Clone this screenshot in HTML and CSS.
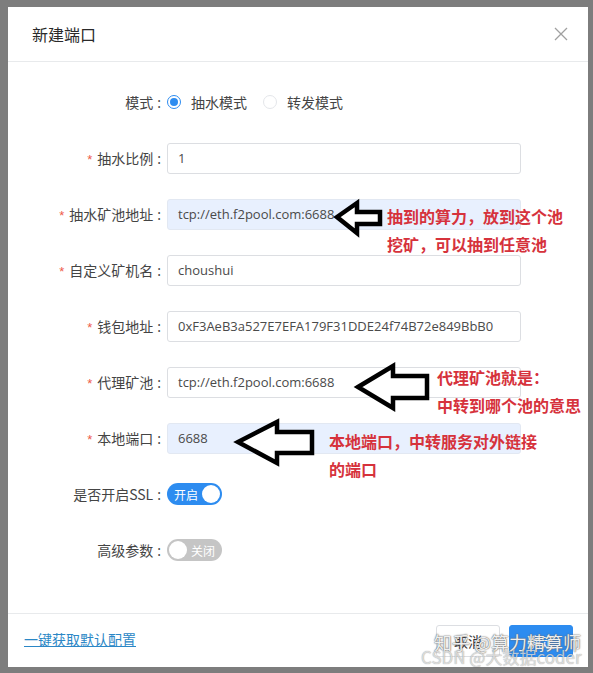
FILE: index.html
```html
<!DOCTYPE html>
<html lang="zh-CN">
<head>
<meta charset="utf-8">
<title>新建端口</title>
<link rel="stylesheet" href="styles.css">
</head>
<body>
<div class="page">
  <div class="modal">
    <div class="modal-header">
      <span class="title">新建端口</span>
      <svg class="close" width="14" height="14" viewBox="0 0 14 14"><path d="M1 1L13 13M13 1L1 13" stroke="#a0a0a0" stroke-width="1.3" fill="none"/></svg>
    </div>
    <div class="modal-body">
      <div class="item">
        <label class="label">模式<span class="colon">:</span></label>
        <div class="control radios">
          <span class="radio checked"><span class="dot"></span></span><span class="radio-text">抽水模式</span>
          <span class="radio"></span><span class="radio-text">转发模式</span>
        </div>
      </div>
      <div class="item">
        <label class="label"><span class="req">*</span>抽水比例<span class="colon">:</span></label>
        <div class="control"><div class="input">1</div></div>
      </div>
      <div class="item">
        <label class="label"><span class="req">*</span>抽水矿池地址<span class="colon">:</span></label>
        <div class="control"><div class="input filled">tcp://eth.f2pool.com:6688</div></div>
      </div>
      <div class="item">
        <label class="label"><span class="req">*</span>自定义矿机名<span class="colon">:</span></label>
        <div class="control"><div class="input">choushui</div></div>
      </div>
      <div class="item">
        <label class="label"><span class="req">*</span>钱包地址<span class="colon">:</span></label>
        <div class="control"><div class="input">0xF3AeB3a527E7EFA179F31DDE24f74B72e849BbB0</div></div>
      </div>
      <div class="item">
        <label class="label"><span class="req">*</span>代理矿池<span class="colon">:</span></label>
        <div class="control"><div class="input">tcp://eth.f2pool.com:6688</div></div>
      </div>
      <div class="item">
        <label class="label"><span class="req">*</span>本地端口<span class="colon">:</span></label>
        <div class="control"><div class="input filled">6688</div></div>
      </div>
      <div class="item">
        <label class="label">是否开启SSL<span class="colon">:</span></label>
        <div class="control"><span class="switch on"><span class="switch-text">开启</span><span class="knob"></span></span></div>
      </div>
      <div class="item">
        <label class="label">高级参数<span class="colon">:</span></label>
        <div class="control"><span class="switch off"><span class="knob"></span><span class="switch-text">关闭</span></span></div>
      </div>
    </div>
    <div class="modal-footer">
      <a class="link">一键获取默认配置</a>
      <div class="buttons">
        <span class="btn">取消</span>
        <span class="btn primary">确定</span>
      </div>
    </div>
  </div>

  <svg class="arrow a1" width="60" height="50" viewBox="0 0 60 50"><polygon points="5,19 25,5 25,14 48,14 48,26 25,26 25,35" /></svg>
  <svg class="arrow a2" width="90" height="60" viewBox="0 0 90 60"><polygon points="5,26 40,5 40,15 74,15 74,37 40,37 40,47" /></svg>
  <svg class="arrow a3" width="90" height="60" viewBox="0 0 90 60"><polygon points="5,25 44,5 44,15 79,15 79,36 44,36 44,46" /></svg>

  <div class="note n1">抽到的算力，放到这个池<br>挖矿，可以抽到任意池</div>
  <div class="note n2">代理矿池就是：<br>中转到哪个池的意思</div>
  <div class="note n3">本地端口，中转服务对外链接<br>的端口</div>

  <div class="wm wm1">知乎 @算力精算师</div>
  <div class="wm wm2">CSDN @大数据coder</div>
</div>
</body>
</html>
```

FILE: styles.css
```css
html, body {
  margin: 0;
  padding: 0;
  background: #7d7d7d;
}
.page {
  position: relative;
  width: 593px;
  height: 673px;
  padding: 7px 5px 6px 8px;
  box-sizing: border-box;
  font-family: "Noto Sans CJK SC", "Noto Sans", sans-serif;
  color: #515a6e;
  overflow: hidden;
}
.modal {
  width: 580px;
  height: 660px;
  background: #fff;
  display: flex;
  flex-direction: column;
}
.modal-header {
  height: 54px;
  border-bottom: 1px solid #e8eaec;
  display: flex;
  align-items: center;
  justify-content: space-between;
  padding: 0 20px 0 24px;
}
.title {
  font-size: 16px;
  color: #2a2a2a;
}
.close {
  display: block;
}
.modal-body {
  padding: 24px 16px 23px 16px;
  height: 551px;
  box-sizing: border-box;
}
.item {
  display: flex;
  align-items: center;
  height: 32px;
  margin-bottom: 24px;
}
.label {
  width: 143px;
  box-sizing: border-box;
  padding-right: 6px;
  text-align: right;
  font-size: 14px;
  color: #444;
  white-space: nowrap;
}
.colon {
  margin-left: 4px;
  font-family: "Noto Sans", sans-serif;
}
.req {
  color: #ee5a4a;
  font-family: "Liberation Sans", sans-serif;
  font-size: 13px;
  margin-right: 5px;
}
.control {
  width: 354px;
  height: 32px;
  display: flex;
  align-items: center;
}
.input {
  width: 100%;
  height: 31px;
  box-sizing: border-box;
  border: 1px solid #dcdee2;
  border-radius: 3px;
  padding: 0 10px;
  display: flex;
  align-items: center;
  font-family: "Open Sans", "Noto Sans CJK SC", sans-serif;
  font-size: 13px;
  color: #4a4a4a;
  background: #fff;
}
.input.filled {
  background: #e8f0fe;
  border-color: #e2e8f2;
}
.radios {
  font-size: 14px;
  color: #444;
}
.radio {
  width: 14px;
  height: 14px;
  box-sizing: border-box;
  border: 1px solid #e4e6ea;
  border-radius: 50%;
  display: inline-flex;
  align-items: center;
  justify-content: center;
  margin-right: 10px;
}
.radio.checked {
  border-color: #2d8cf0;
}
.dot {
  width: 8px;
  height: 8px;
  border-radius: 50%;
  background: #2d8cf0;
}
.radio-text {
  margin-right: 16px;
}
.switch {
  width: 55px;
  height: 22px;
  border-radius: 11px;
  box-sizing: border-box;
  display: inline-flex;
  align-items: center;
  padding: 0 2px;
  font-size: 12px;
  color: #fff;
}
.switch.on {
  background: #2d8cf0;
  justify-content: space-between;
  padding-left: 7px;
}
.switch.off {
  background: #c5c5c5;
  justify-content: space-between;
  padding-right: 7px;
}
.knob {
  width: 18px;
  height: 18px;
  border-radius: 50%;
  background: #fff;
}
.modal-footer {
  height: 54px;
  box-sizing: border-box;
  border-top: 1px solid #e8eaec;
  padding: 0 15px 0 16px;
  display: flex;
  align-items: center;
  justify-content: space-between;
}
.link {
  font-size: 14px;
  color: #2b87c6;
  text-decoration: underline;
  margin-top: -4px;
}
.buttons {
  display: flex;
  gap: 9px;
}
.btn {
  width: 64px;
  height: 32px;
  box-sizing: border-box;
  border: 1px solid #dcdee2;
  border-radius: 3px;
  display: flex;
  align-items: center;
  justify-content: center;
  font-size: 14px;
  color: #333;
  background: #fff;
}
.btn.primary {
  background: #2d8cf0;
  border-color: #2d8cf0;
  color: #fff;
}
.arrow {
  position: absolute;
}
.arrow polygon {
  fill: #fff;
  stroke: #000;
  stroke-width: 4.5;
  stroke-linejoin: miter;
}
.a1 { left: 332px; top: 198px; }
.a2 { left: 353px; top: 361px; }
.a3 { left: 233px; top: 417px; }
.note {
  position: absolute;
  font-size: 16px;
  font-weight: 700;
  line-height: 28px;
  color: #d6323c;
  white-space: nowrap;
}
.n1 { left: 387px; top: 202px; }
.n2 { left: 437px; top: 363px; }
.n3 { left: 329px; top: 427px; }
.wm {
  position: absolute;
  white-space: nowrap;
  font-size: 18px;
  font-family: "Noto Sans CJK SC", sans-serif;
}
.wm1 {
  left: 434px;
  top: 629px;
  color: rgba(255, 255, 255, 0.92);
  text-shadow: 0 0 1px #555, 0 0 2px #777;
}
.wm2 {
  left: 421px;
  top: 644px;
  font-size: 17px;
  color: rgba(240, 240, 240, 0.75);
  text-shadow: 0 0 1px rgba(0,0,0,0.45);
}
```
